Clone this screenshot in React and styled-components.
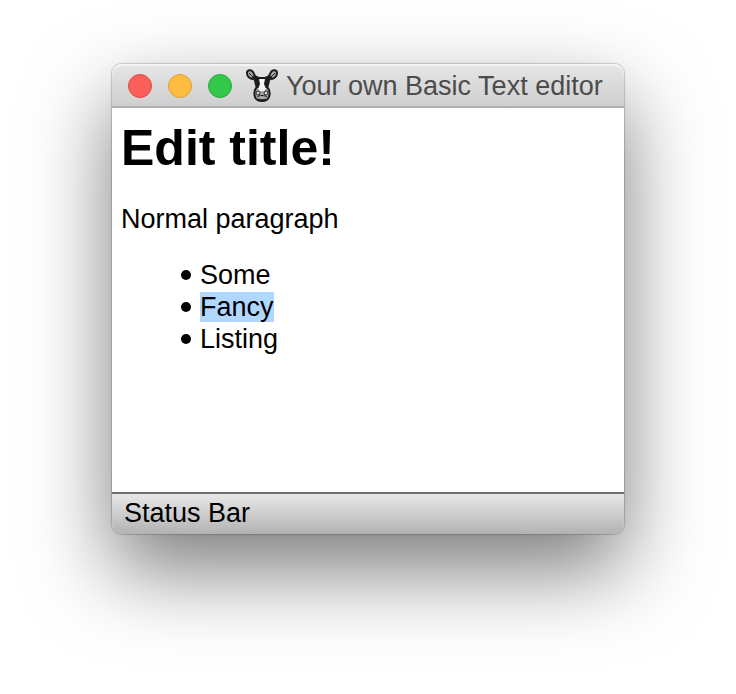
import React from "react";
import styled, { createGlobalStyle } from "styled-components";

const GlobalStyle = createGlobalStyle`
  * { box-sizing: border-box; }
  body {
    margin: 0;
    background: #fff;
    color: #000;
    font: 27px/32px "Liberation Sans", Arial, sans-serif;
  }
`;

const Desktop = styled.main`
  padding: 64px 112px 160px;
`;

const Window = styled.section`
  display: flex;
  flex-direction: column;
  background: #fff;
  border-radius: 10px;
  box-shadow:
    0 0 0 1px rgba(0, 0, 0, 0.12),
    0 0 3px rgba(0, 0, 0, 0.12),
    0 36px 84px rgba(0, 0, 0, 0.52);
`;

const TitleBar = styled.header`
  display: flex;
  align-items: center;
  height: 44px;
  padding: 2px 16px 0;
  border-bottom: 2px solid #b0b0b0;
  border-radius: 10px 10px 0 0;
  background: linear-gradient(#e6e6e6, #cfcfcf);
  box-shadow: inset 0 2px #f4f4f4;
`;

const Controls = styled.div`
  display: flex;
  gap: 16px;
`;

const ControlButton = styled.button`
  width: 24px;
  height: 24px;
  padding: 0;
  border: 1px solid ${(p) => p.$edge};
  border-radius: 50%;
  background: ${(p) => p.$fill};
`;

const Title = styled.h1`
  display: flex;
  align-items: center;
  gap: 8px;
  margin: 0 0 0 14px;
  font-size: 27px;
  line-height: 34px;
  font-weight: 400;
  color: #4c4c4c;
  white-space: nowrap;
`;

const Mascot = styled.svg`
  flex: none;
  width: 32px;
  height: 34px;
`;

const Editor = styled.article`
  min-height: 384px;
  padding: 9px;
  outline: none;
`;

const Heading = styled.h2`
  margin: 0;
  font-size: 50px;
  line-height: 62px;
  font-weight: 700;
`;

const Paragraph = styled.p`
  margin: 24px 0;
`;

const List = styled.ul`
  margin: 0;
  padding: 0 0 0 79px;
  list-style: none;
`;

const Item = styled.li`
  display: flex;
  align-items: center;
  min-height: 32px;

  &::before {
    content: "";
    width: 10px;
    height: 10px;
    margin: 0 9px 0 -19px;
    border-radius: 50%;
    background: #000;
  }
`;

const Selected = styled.mark`
  color: inherit;
  line-height: 30px;
  background: #b2d7ff;
`;

const StatusBar = styled.footer`
  display: flex;
  align-items: center;
  height: 42px;
  padding: 0 12px 2px;
  border-top: 2px solid #6e6e6e;
  border-radius: 0 0 10px 10px;
  background: linear-gradient(#e8e8e8, #b2b2b2);
`;

const controls = [
  { label: "Close", fill: "#fc605b", edge: "#e2463f" },
  { label: "Minimize", fill: "#fdbc40", edge: "#dfa033" },
  { label: "Zoom", fill: "#34c84a", edge: "#24a936" },
];

function CowIcon() {
  return (
    <Mascot viewBox="0 0 32 34" aria-hidden="true">
      <g fill="none" stroke="#1c1c1c">
        <path d="M8 7l5 2h6l5-2-2 9-3 4h-6l-3-4z" fill="#1c1c1c" strokeWidth="2" strokeLinejoin="round" />
        <path d="M7 8l4 3M25 8l-4 3" strokeWidth="4" />
        <g fill="#aaa" strokeWidth="2">
          <path d="M1 4c0-3 4-4 6-1l2 4-3 3C3 9 1 7 1 4zM31 4c0-3-4-4-6-1l-2 4 3 3c3-1 5-3 5-6z" />
          <path d="M10 19c-2 3-2 6-1 9 1 3 3 4 7 4s6-1 7-4c1-3 1-6-1-9" />
        </g>
        <path d="M13 10h6l-1 5 2 5h-8l2-5z" fill="#f4f4f4" stroke="none" />
        <path d="M3 4l4 4M29 4l-4 4" strokeWidth="1" />
        <path d="M11 16l-1 4M21 16l1 4" strokeWidth="2" />
        <path d="M13 21h6" stroke="#eee" strokeWidth="2" />
        <g strokeWidth="1" fill="#ddd">
          <circle cx="12" cy="24" r="2" />
          <circle cx="20" cy="24" r="2" />
        </g>
        <path d="M11 28c2-2 8-2 10 0M12 30c3 1 5 1 8 0" strokeWidth="1" />
      </g>
    </Mascot>
  );
}

export default function App() {
  return (
    <>
      <GlobalStyle />
      <Desktop>
        <Window>
          <TitleBar>
            <Controls>
              {controls.map((c) => (
                <ControlButton key={c.label} type="button" aria-label={c.label} $fill={c.fill} $edge={c.edge} />
              ))}
            </Controls>
            <Title>
              <CowIcon />
              Your own Basic Text editor
            </Title>
          </TitleBar>
          <Editor contentEditable suppressContentEditableWarning aria-label="Document">
            <Heading>Edit title!</Heading>
            <Paragraph>Normal paragraph</Paragraph>
            <List>
              <Item>Some</Item>
              <Item>
                <Selected>Fancy</Selected>
              </Item>
              <Item>Listing</Item>
            </List>
          </Editor>
          <StatusBar>Status Bar</StatusBar>
        </Window>
      </Desktop>
    </>
  );
}
